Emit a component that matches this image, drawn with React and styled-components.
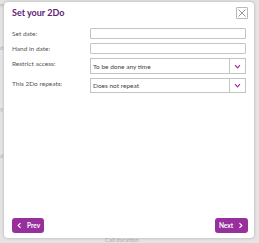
import React from 'react';
import styled, { createGlobalStyle } from 'styled-components';

const Global = createGlobalStyle`
  html, body { margin: 0; padding: 0; }
  body {
    background: #e4e4e4;
    font-family: 'Lato', 'Open Sans', sans-serif;
    width: 259px;
    height: 243px;
    overflow: hidden;
  }
`;

const purple = '#972f9c';

const Page = styled.div`
  position: relative;
  width: 259px;
  height: 243px;
  padding: 2px 5px 0 4px;
  box-sizing: border-box;
`;

const Behind = styled.span`
  position: absolute;
  font-size: 6px;
  line-height: 7px;
  color: #b0b0b0;
  left: ${p => p.x}px;
  top: ${p => p.y}px;
`;

const Modal = styled.div`
  position: relative;
  width: 250px;
  height: 236px;
  background: #fff;
  border-radius: 4px;
  box-shadow: 0 0 3px rgba(0, 0, 0, 0.25);
  box-sizing: border-box;
  padding: 5px 6px 5px 8px;
  display: flex;
  flex-direction: column;
`;

const Title = styled.h2`
  margin: 0;
  font-size: 9px;
  font-weight: 700;
  color: #5d2373;
  height: 21px;
  line-height: 12px;
`;

const Close = styled.button`
  position: absolute;
  right: 6px;
  top: 5px;
  width: 12px;
  height: 12px;
  padding: 0;
  border: 1px solid #b9b9b9;
  background: #fff;
  border-radius: 1px;
  display: flex;
  align-items: center;
  justify-content: center;
`;

const Form = styled.div`
  display: grid;
  grid-template-columns: 78px 156px;
  row-gap: 4px;
  align-items: start;
`;

const Label = styled.label`
  font-size: 6.5px;
  line-height: 11px;
  color: #555;
`;

const Input = styled.div`
  height: 11px;
  border: 1px solid #c4c4c4;
  box-sizing: border-box;
  border-radius: 1px;
`;

const Select = styled.div`
  height: ${p => p.h}px;
  border: 1px solid #c4c4c4;
  box-sizing: border-box;
  display: flex;
  align-items: center;
  font-size: 6.5px;
  color: #444;
`;

const SelectText = styled.span`
  flex: 1;
  padding-left: 2px;
`;

const Arrow = styled.span`
  width: 15px;
  height: 100%;
  border-left: 1px solid #c4c4c4;
  display: flex;
  align-items: center;
  justify-content: center;
`;

const Footer = styled.div`
  margin-top: auto;
  display: flex;
  justify-content: space-between;
`;

const NavButton = styled.button`
  height: 15px;
  width: ${p => p.w}px;
  background: ${purple};
  border: none;
  border-radius: 3px;
  color: #fff;
  font-family: 'Lato', sans-serif;
  font-size: 6.5px;
  font-weight: 700;
  display: flex;
  align-items: center;
  justify-content: center;
  gap: 4px;
  padding: 0;
`;

const Chevron = ({ dir, color = '#fff', size = 7 }) => (
  <svg width={size} height={size} viewBox="0 0 10 10">
    <path
      d={dir === 'left' ? 'M6.5 1.5 L3 5 L6.5 8.5' : dir === 'right' ? 'M3.5 1.5 L7 5 L3.5 8.5' : 'M1.5 3 L5 7 L8.5 3'}
      fill="none"
      stroke={color}
      strokeWidth="1.6"
    />
  </svg>
);

export default function App() {
  return (
    <>
      <Global />
      <Page>
        <Behind x={0} y={1}>ny</Behind>
        <Behind x={26} y={1}>Select At</Behind>
        <Behind x={0} y={44}>d</Behind>
        <Behind x={0} y={105}>y</Behind>
        <Behind x={0} y={152}>d</Behind>
        <Behind x={105} y={236}>Call duration</Behind>
        <Modal>
          <Title>Set your 2Do</Title>
          <Close aria-label="close">
            <svg width="8" height="8" viewBox="0 0 8 8">
              <path d="M0.5 0.5 L7.5 7.5 M7.5 0.5 L0.5 7.5" stroke="#8a8a8a" strokeWidth="0.9" />
            </svg>
          </Close>
          <Form>
            <Label>Set date:</Label>
            <Input />
            <Label>Hand in date:</Label>
            <Input />
            <Label>Restrict access:</Label>
            <Select h={16}>
              <SelectText>To be done any time</SelectText>
              <Arrow><Chevron dir="down" color={purple} /></Arrow>
            </Select>
            <Label>This 2Do repeats:</Label>
            <Select h={15}>
              <SelectText>Does not repeat</SelectText>
              <Arrow><Chevron dir="down" color={purple} /></Arrow>
            </Select>
          </Form>
          <Footer>
            <NavButton w={32}><Chevron dir="left" />Prev</NavButton>
            <NavButton w={33}>Next<Chevron dir="right" /></NavButton>
          </Footer>
        </Modal>
      </Page>
    </>
  );
}
